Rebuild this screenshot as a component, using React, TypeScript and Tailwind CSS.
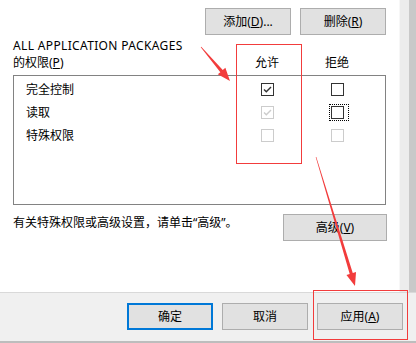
import React from 'react';

type Perm = { name: string; allow: 'on' | 'off' | 'dis-on' | 'dis'; deny: 'on' | 'off' | 'dis-on' | 'dis'; focus?: boolean };

const PERMS: Perm[] = [
  { name: '完全控制', allow: 'on', deny: 'off' },
  { name: '读取', allow: 'dis-on', deny: 'off', focus: true },
  { name: '特殊权限', allow: 'dis', deny: 'dis' },
];

function CheckBox({ state }: { state: Perm['allow'] }) {
  const disabled = state === 'dis' || state === 'dis-on';
  const checked = state === 'on' || state === 'dis-on';
  return (
    <span
      className={`block w-[13px] h-[13px] border bg-white ${disabled ? 'border-[#cccccc]' : 'border-[#333333]'}`}
    >
      {checked && (
        <svg width="11" height="11" viewBox="0 0 11 11" className="block">
          <path
            d="M2 5.5 L4.3 7.8 L9 3"
            fill="none"
            stroke={disabled ? '#cccccc' : '#333333'}
            strokeWidth="1.4"
          />
        </svg>
      )}
    </span>
  );
}

// arrow drawn as a tapered shaft plus a head, from a to b
function arrowPoints(ax: number, ay: number, bx: number, by: number) {
  const len = Math.hypot(bx - ax, by - ay);
  const dx = (bx - ax) / len;
  const dy = (by - ay) / len;
  const nx = -dy;
  const ny = dx;
  const head = 13;
  const hw = 5;
  const cx = bx - dx * head;
  const cy = by - dy * head;
  const pts = [
    [ax + nx * 0.3, ay + ny * 0.3],
    [cx + nx * 1.6, cy + ny * 1.6],
    [cx + nx * hw, cy + ny * hw],
    [bx, by],
    [cx - nx * hw, cy - ny * hw],
    [cx - nx * 1.6, cy - ny * 1.6],
    [ax - nx * 0.3, ay - ny * 0.3],
  ];
  return pts.map(p => p.join(',')).join(' ');
}

function Btn({ children, primary, className = '' }: { children: React.ReactNode; primary?: boolean; className?: string }) {
  return (
    <div
      className={`h-[27px] flex items-center justify-center bg-[#e1e1e1] ${
        primary ? 'border-2 border-[#0078d7]' : 'border border-[#adadad]'
      } ${className}`}
    >
      {children}
    </div>
  );
}

export default function App() {
  return (
    <div className="relative w-[416px] h-[343px] overflow-hidden bg-white text-[12px] text-black font-['Noto_Sans','Noto_Sans_CJK_SC',sans-serif]">
      <div className="flex h-[292px]">
        {/* Main panel */}
        <div className="w-[399px] bg-white px-[13px] pt-[8px]">
          <div className="flex justify-end gap-[9px]">
            <Btn className="w-[86px]">
              添加(<span className="underline">D</span>)...
            </Btn>
            <Btn className="w-[86px]">
              删除(<span className="underline">R</span>)
            </Btn>
          </div>

          {/* Header */}
          <div className="mt-[2px] grid grid-cols-[219px_70px_70px] leading-[17px]">
            <div>
              <div className="whitespace-nowrap tracking-[0.35px]">ALL APPLICATION PACKAGES</div>
              <div>
                的权限(<span className="underline">P</span>)
              </div>
            </div>
            <div className="self-end text-center">允许</div>
            <div className="self-end text-center">拒绝</div>
          </div>

          {/* Permission list */}
          <div className="mt-[4px] h-[130px] border border-[#828282] pt-[2px]">
            {PERMS.map(p => (
              <div key={p.name} className="grid grid-cols-[218px_70px_70px] h-[23px] items-center">
                <div className="pl-[12px]">{p.name}</div>
                <div className="flex justify-center">
                  <CheckBox state={p.allow} />
                </div>
                <div className="flex justify-center">
                  {p.focus ? (
                    <span className="block pl-[1px] pr-[4px] py-[1px] border border-dotted border-black -mr-[3px]">
                      <CheckBox state={p.deny} />
                    </span>
                  ) : (
                    <CheckBox state={p.deny} />
                  )}
                </div>
              </div>
            ))}
          </div>

          <div className="mt-[9px] flex justify-between items-start">
            <div className="leading-[16px] pt-[1px]">有关特殊权限或高级设置，请单击“高级”。</div>
            <Btn className="w-[104px] -mr-[1px]">
              高级(<span className="underline">V</span>)
            </Btn>
          </div>
        </div>

        {/* Scroll strip */}
        <div className="w-[10px] bg-[#ececec] border-l border-[#f7f7f7]" />
        <div className="w-[7px] bg-[#c9c9c9]" />
      </div>

      {/* Bottom button bar */}
      <div className="h-[49px] bg-[#f0f0f0] border-t border-[#d9d9d9] flex justify-end items-start gap-[9px] pt-[10px] pr-[13px]">
        <Btn primary className="w-[86px]">确定</Btn>
        <Btn className="w-[86px]">取消</Btn>
        <Btn className="w-[86px]">
          应用(<span className="underline">A</span>)
        </Btn>
      </div>
      <div className="h-[2px] bg-[#bdbdbd]" />

      {/* Annotation overlays */}
      <div className="absolute left-[236px] top-[44px] w-[66px] h-[120px] border border-[#f23c3c] pointer-events-none" />
      <div className="absolute left-[313px] top-[290px] w-[95px] h-[50px] border border-[#f23c3c] pointer-events-none" />
      <svg className="absolute inset-0 pointer-events-none" width="416" height="343">
        <polygon points={arrowPoints(201, 47, 230, 81)} fill="#f23c3c" />
        <polygon points={arrowPoints(316, 157, 355, 286)} fill="#f23c3c" />
      </svg>
    </div>
  );
}
